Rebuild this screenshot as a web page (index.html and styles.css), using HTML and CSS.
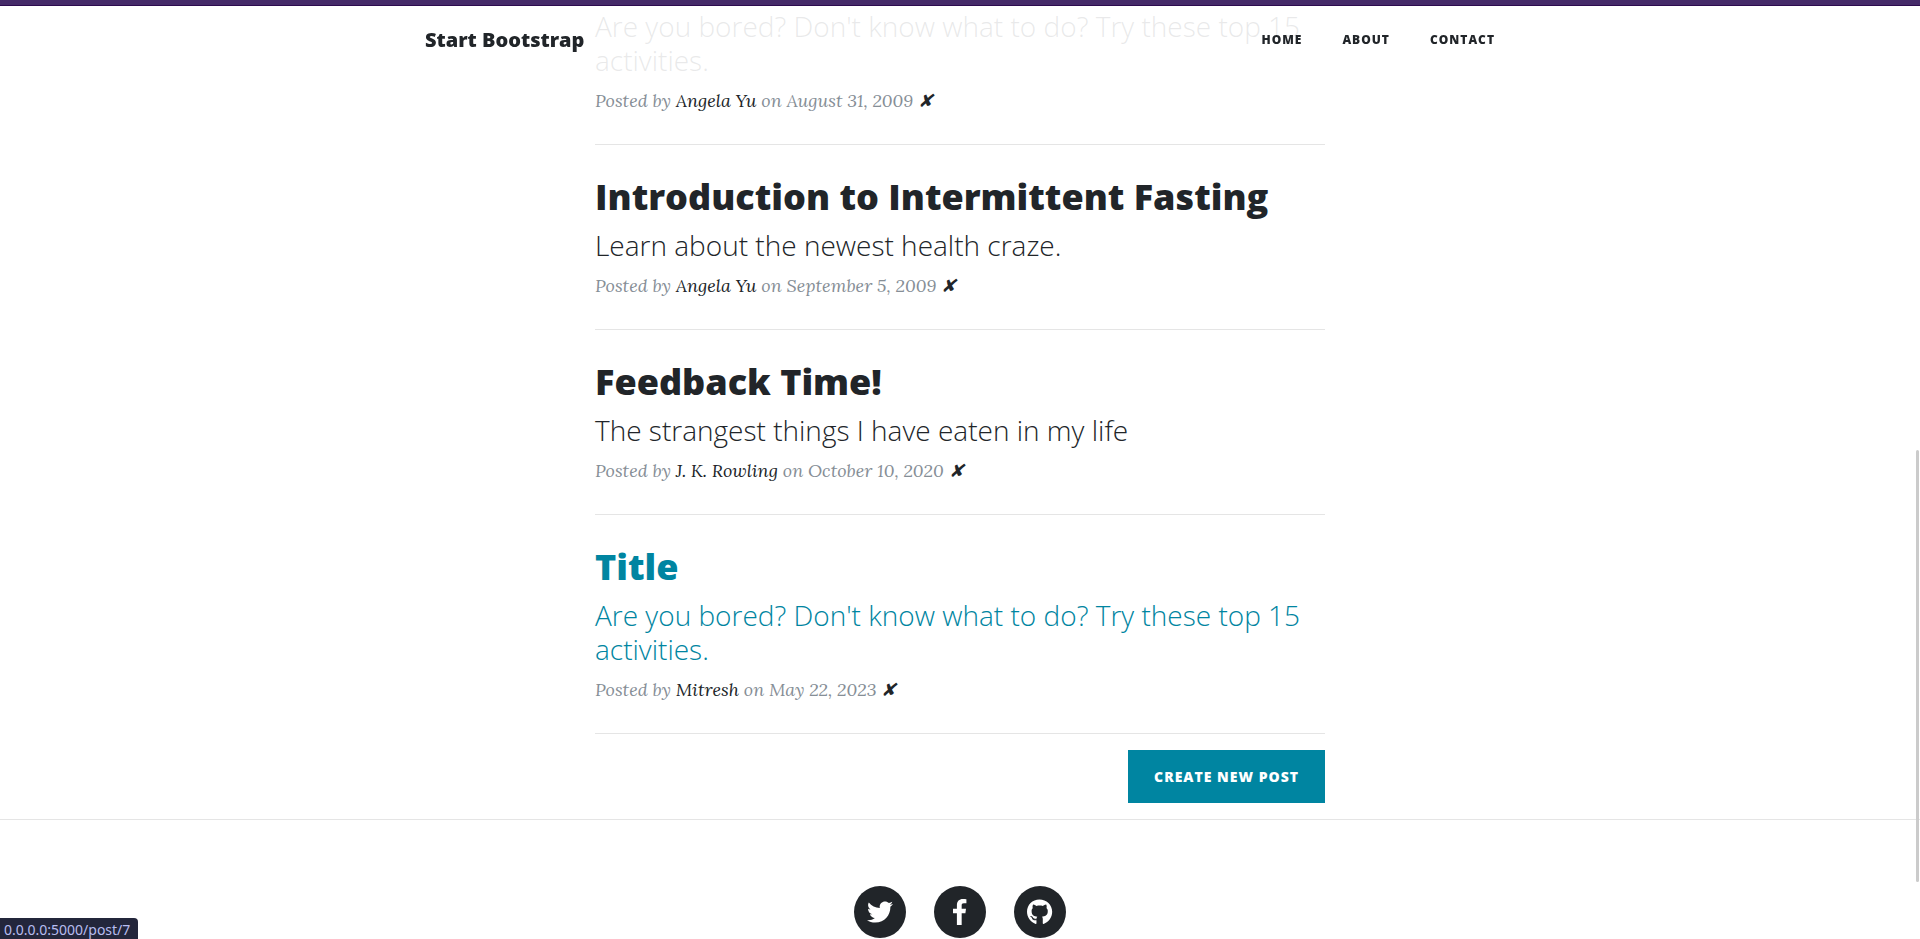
FILE: index.html
```html
<!DOCTYPE html>
<html lang="en">
<head>
<meta charset="utf-8">
<meta name="viewport" content="width=device-width, initial-scale=1">
<title>Clean Blog</title>
<link rel="stylesheet" href="styles.css">
</head>
<body>
<div class="top-strip"></div>
<nav class="navbar">
  <div class="navbar-inner">
    <a class="brand" href="#">Start Bootstrap</a>
    <ul class="nav-links">
      <li><a href="#">Home</a></li>
      <li><a href="#">About</a></li>
      <li><a href="#">Contact</a></li>
    </ul>
  </div>
</nav>
<main class="posts">
  <article class="post">
    <a class="post-link" href="#"><h3 class="subtitle">Are you bored? Don't know what to do? Try these top 15 activities.</h3></a>
    <p class="meta">Posted by <a href="#">Angela Yu</a> on August 31, 2009 <a href="#">✘</a></p>
  </article>
  <article class="post">
    <a class="post-link" href="#"><h2 class="title">Introduction to Intermittent Fasting</h2><h3 class="subtitle">Learn about the newest health craze.</h3></a>
    <p class="meta">Posted by <a href="#">Angela Yu</a> on September 5, 2009 <a href="#">✘</a></p>
  </article>
  <article class="post">
    <a class="post-link" href="#"><h2 class="title">Feedback Time!</h2><h3 class="subtitle">The strangest things I have eaten in my life</h3></a>
    <p class="meta">Posted by <a href="#">J. K. Rowling</a> on October 10, 2020 <a href="#">✘</a></p>
  </article>
  <article class="post">
    <a class="post-link active" href="#"><h2 class="title">Title</h2><h3 class="subtitle">Are you bored? Don't know what to do? Try these top 15 activities.</h3></a>
    <p class="meta">Posted by <a href="#">Mitresh</a> on May 22, 2023 <a href="#">✘</a></p>
  </article>
  <div class="actions"><button class="btn" type="button">Create New Post</button></div>
</main>
<footer class="footer">
  <a class="social" href="#" aria-label="Twitter"><svg viewBox="0 0 512 512"><path d="M459.37 151.716c.325 4.548.325 9.097.325 13.645 0 138.72-105.583 298.558-298.558 298.558-59.452 0-114.68-17.219-161.137-47.106 8.447.974 16.568 1.299 25.34 1.299 49.055 0 94.213-16.568 130.274-44.832-46.132-.975-84.792-31.188-98.112-72.772 6.498.974 12.995 1.624 19.818 1.624 9.421 0 18.843-1.3 27.614-3.573-48.081-9.747-84.143-51.98-84.143-102.985v-1.299c13.969 7.797 30.214 12.67 47.431 13.319-28.264-18.843-46.781-51.005-46.781-87.391 0-19.492 5.197-37.36 14.294-52.954 51.655 63.675 129.3 105.258 216.365 109.807-1.624-7.797-2.599-15.918-2.599-24.04 0-57.828 46.782-104.934 104.934-104.934 30.213 0 57.502 12.67 76.67 33.137 23.715-4.548 46.456-13.32 66.599-25.34-7.798 24.366-24.366 44.833-46.132 57.827 21.117-2.273 41.584-8.122 60.426-16.243-14.292 20.791-32.161 39.308-52.628 54.253z"/></svg></a>
  <a class="social" href="#" aria-label="Facebook"><svg viewBox="0 0 264 512"><path d="M76.7 512V283H0v-91h76.7v-71.7C76.7 42.4 124.3 0 193.8 0c33.3 0 61.9 2.5 70.2 3.6V85h-48.2c-37.8 0-45.1 18-45.1 44.3V192H256l-11.7 91h-73.6v229z"/></svg></a>
  <a class="social" href="#" aria-label="GitHub"><svg viewBox="0 0 496 512"><path d="M165.9 397.4c0 2-2.3 3.6-5.2 3.6-3.3.3-5.6-1.3-5.6-3.6 0-2 2.3-3.6 5.2-3.6 3-.3 5.6 1.3 5.6 3.6zm-31.1-4.5c-.7 2 1.3 4.3 4.3 4.9 2.6 1 5.6 0 6.2-2s-1.3-4.3-4.3-5.2c-2.6-.7-5.5.3-6.2 2.3zm44.2-1.7c-2.9.7-4.9 2.6-4.6 4.9.3 2 2.9 3.3 5.9 2.6 2.9-.7 4.9-2.6 4.6-4.6-.3-1.9-3-3.2-5.9-2.9zM244.8 8C106.1 8 0 113.3 0 252c0 110.9 69.8 205.8 169.5 239.2 12.8 2.3 17.3-5.6 17.3-12.1 0-6.2-.3-40.4-.3-61.4 0 0-70 15-84.7-29.8 0 0-11.4-29.1-27.8-36.6 0 0-22.9-15.7 1.6-15.4 0 0 24.9 2 38.6 25.8 21.9 38.6 58.6 27.5 72.9 20.9 2.3-16 8.8-27.1 16-33.7-55.9-6.2-112.3-14.3-112.3-110.5 0-27.5 7.6-41.3 23.6-58.9-2.6-6.5-11.1-33.3 2.6-67.9 20.9-6.5 69 27 69 27 20-5.6 41.5-8.5 62.8-8.5s42.8 2.9 62.8 8.5c0 0 48.1-33.6 69-27 13.7 34.7 5.2 61.4 2.6 67.9 16 17.7 25.8 31.5 25.8 58.9 0 96.5-58.9 104.2-114.8 110.5 9.2 7.9 17 22.9 17 46.4 0 33.7-.3 75.4-.3 83.6 0 6.5 4.6 14.4 17.3 12.1C428.2 457.8 496 362.9 496 252 496 113.3 383.5 8 244.8 8z"/></svg></a>
</footer>
<div class="status">0.0.0.0:5000/post/7</div>
<div class="scroll-thumb"></div>
</body>
</html>
```
FILE: styles.css
```css
* { box-sizing: border-box; }

body {
  margin: 0;
  background: #fff;
  color: #212529;
  font-family: "Open Sans", sans-serif;
}

a { color: inherit; text-decoration: none; }

.top-strip {
  position: fixed;
  top: 0;
  left: 0;
  right: 0;
  z-index: 3;
  height: 6px;
  background: #452a68;
  border-bottom: 1px solid #2d0a4e;
}

.navbar {
  position: fixed;
  top: 6px;
  left: 0;
  right: 0;
  z-index: 2;
  padding: 13px 20px 15px;
  background: rgba(255, 255, 255, 0.9);
}

.navbar-inner {
  display: flex;
  justify-content: space-between;
  align-items: center;
  max-width: 1070px;
  min-height: 40px;
  margin: 0 auto;
}

.brand { font-size: 20px; font-weight: 800; }

.nav-links {
  display: flex;
  gap: 40px;
  margin: 0;
  padding: 0;
  list-style: none;
  font-size: 12px;
  font-weight: 800;
  letter-spacing: 1px;
  text-transform: uppercase;
}

.posts {
  max-width: 730px;
  margin: 0 auto;
  padding: 9px 0 16px;
}

.post {
  margin-bottom: 30px;
  padding-bottom: 30px;
  border-bottom: 1px solid #e5e5e5;
}

.post:nth-last-child(2) { margin-bottom: 16px; }

.post-link { display: block; }
.active { color: #0085a1; }

.title {
  margin: 0 0 10px;
  font-size: 36px;
  font-weight: 800;
  line-height: 43px;
}

.subtitle {
  margin: 0 0 10px;
  font-size: 28px;
  font-weight: 300;
  line-height: 34px;
}

.meta {
  height: 27px;
  margin: 0;
  color: #868e96;
  font-family: Lora, "Liberation Serif", serif;
  font-size: 18px;
  font-style: italic;
  line-height: 27px;
}

.meta a { color: #212529; }

.actions { display: flex; justify-content: flex-end; }

.btn {
  padding: 17px 26px;
  border: 0;
  background: #0085a1;
  color: #fff;
  font-family: inherit;
  font-size: 14px;
  font-weight: 800;
  line-height: 19px;
  letter-spacing: 1px;
  text-transform: uppercase;
}

.footer {
  display: flex;
  justify-content: center;
  gap: 28px;
  padding-top: 66px;
  border-top: 1px solid #e5e5e5;
}

.social {
  display: flex;
  justify-content: center;
  align-items: center;
  width: 52px;
  height: 52px;
  border-radius: 50%;
  background: #212529;
}

.social svg { height: 26px; fill: #fff; }

.status {
  position: fixed;
  left: 0;
  bottom: 0;
  z-index: 3;
  padding: 2px 8px 0 4px;
  border-radius: 0 4px 0 0;
  background: #23263b;
  color: #b7bdf0;
  font-family: "Noto Sans", sans-serif;
  font-size: 14px;
  line-height: 19px;
}

.scroll-thumb {
  position: fixed;
  top: 450px;
  right: 1px;
  z-index: 1;
  width: 3px;
  height: 46vh;
  border-radius: 2px;
  background: #cbcbcb;
}
```
